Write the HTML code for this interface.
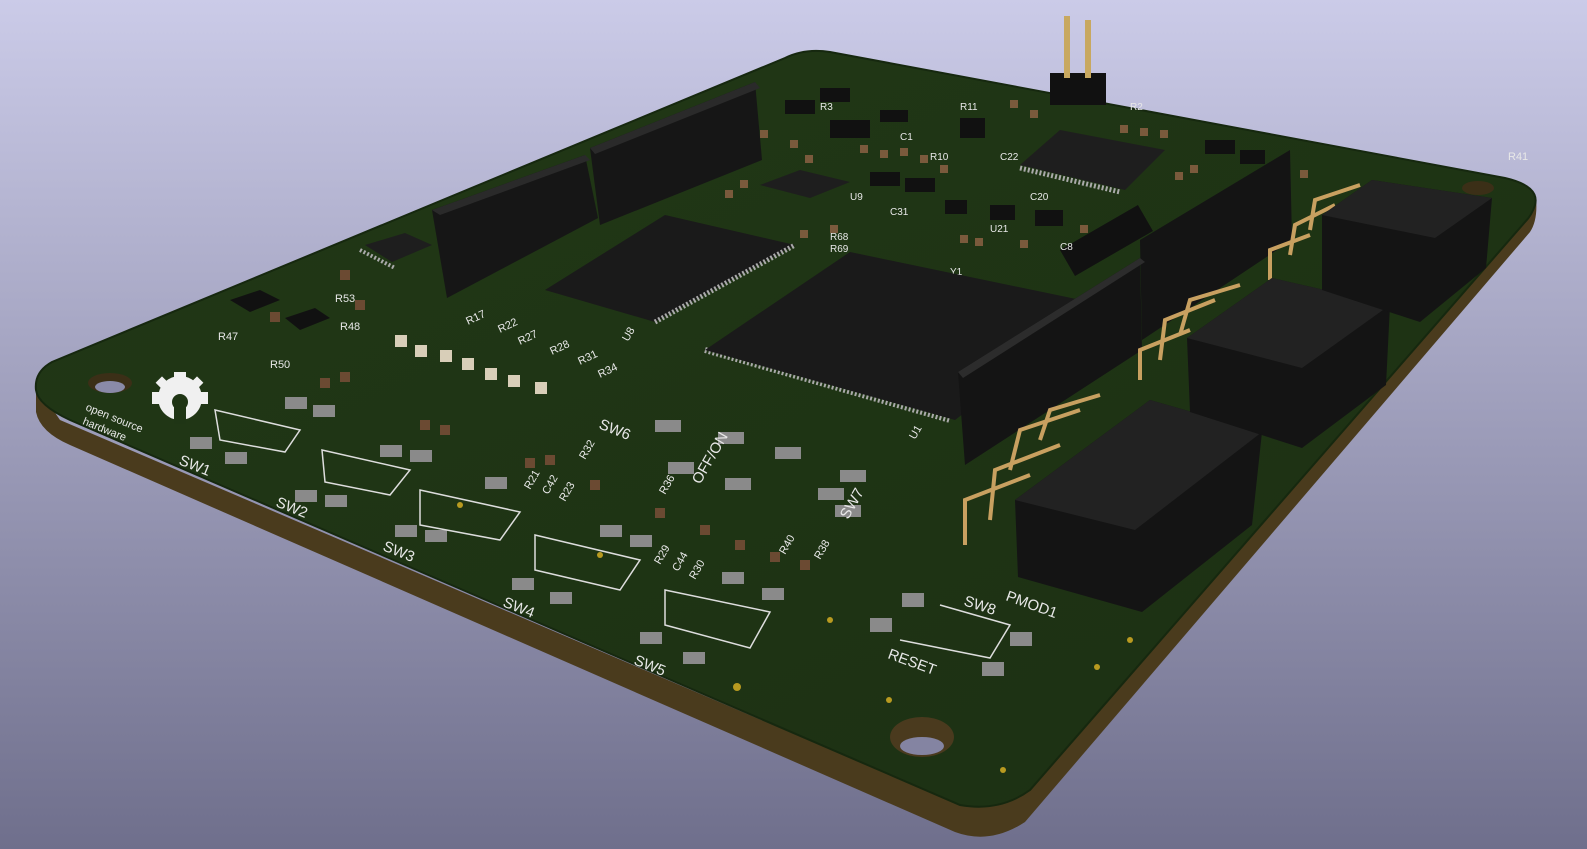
<!DOCTYPE html>
<html><head><meta charset="utf-8"><style>
html,body{margin:0;padding:0;width:1587px;height:849px;overflow:hidden}
svg{display:block}
text{font-family:"Liberation Sans",sans-serif;fill:#e8e8e8}
</style></head><body>
<svg width="1587" height="849" viewBox="0 0 1587 849" xmlns="http://www.w3.org/2000/svg">
<defs>
<linearGradient id="bg" x1="0" y1="0" x2="0" y2="1">
<stop offset="0" stop-color="#cbcbe8"/><stop offset="1" stop-color="#6f6f8c"/>
</linearGradient>
<linearGradient id="gb" x1="0" y1="0" x2="1" y2="1">
<stop offset="0" stop-color="#213816"/><stop offset="1" stop-color="#1c3013"/>
</linearGradient>
</defs>
<rect width="1587" height="849" fill="url(#bg)"/>
<path d="M36,385 L36,412 Q40,432 70,445 L955,832 Q990,845 1025,822 L1530,232 Q1538,220 1536,198 L1030,790 L960,805 L60,420 Z" fill="#4a3b1d"/>
<path d="M36,390 Q34,372 52,362 L785,58 Q805,48 830,52 L1505,178 Q1540,186 1535,205 Q1532,215 1525,222 L1030,790 Q1000,812 960,805 L70,420 Q38,405 36,390 Z" fill="url(#gb)" stroke="#16280f" stroke-width="2"/>
<ellipse cx="110" cy="383" rx="22" ry="10" fill="#3b2f17"/><ellipse cx="110" cy="387" rx="15" ry="6" fill="#8a8aa8"/>
<ellipse cx="922" cy="737" rx="32" ry="20" fill="#4a3a1e"/><ellipse cx="922" cy="746" rx="22" ry="9" fill="#8484a2"/>
<ellipse cx="1478" cy="188" rx="16" ry="7" fill="#3b2f17"/>
<!-- upper area small parts -->
<g fill="#111">
<rect x="785" y="100" width="30" height="14"/><rect x="820" y="88" width="30" height="14"/><rect x="830" y="120" width="40" height="18"/>
<rect x="880" y="110" width="28" height="12"/><rect x="905" y="178" width="30" height="14"/><rect x="960" y="118" width="25" height="20"/>
<rect x="990" y="205" width="25" height="15"/><rect x="945" y="200" width="22" height="14"/><rect x="1035" y="210" width="28" height="16"/>
<rect x="870" y="172" width="30" height="14"/><rect x="1205" y="140" width="30" height="14"/><rect x="1240" y="150" width="25" height="14"/>
<rect x="1060" y="250" width="90" height="30" transform="rotate(-30 1060 250)"/>
</g>
<g fill="#7a5a3c">
<rect x="760" y="130" width="8" height="8"/><rect x="790" y="140" width="8" height="8"/><rect x="805" y="155" width="8" height="8"/><rect x="860" y="145" width="8" height="8"/>
<rect x="880" y="150" width="8" height="8"/><rect x="900" y="148" width="8" height="8"/><rect x="920" y="155" width="8" height="8"/><rect x="940" y="165" width="8" height="8"/>
<rect x="960" y="235" width="8" height="8"/><rect x="975" y="238" width="8" height="8"/><rect x="1010" y="100" width="8" height="8"/><rect x="1030" y="110" width="8" height="8"/>
<rect x="1120" y="125" width="8" height="8"/><rect x="1140" y="128" width="8" height="8"/><rect x="1160" y="130" width="8" height="8"/><rect x="1175" y="172" width="8" height="8"/>
<rect x="1190" y="165" width="8" height="8"/><rect x="1300" y="170" width="8" height="8"/><rect x="740" y="180" width="8" height="8"/><rect x="725" y="190" width="8" height="8"/>
<rect x="800" y="230" width="8" height="8"/><rect x="830" y="225" width="8" height="8"/><rect x="1080" y="225" width="8" height="8"/><rect x="1020" y="240" width="8" height="8"/>
</g>
<g font-size="10">
<text x="900" y="140">C1</text><text x="930" y="160">R10</text><text x="960" y="110">R11</text><text x="1000" y="160">C22</text><text x="1030" y="200">C20</text>
<text x="830" y="240">R68</text><text x="830" y="252">R69</text><text x="950" y="275">Y1</text><text x="1060" y="250">C8</text><text x="890" y="215">C31</text>
<text x="850" y="200">U9</text><text x="990" y="232">U21</text><text x="1130" y="110">R2</text><text x="820" y="110">R3</text>
</g>
<rect x="1050" y="73" width="56" height="32" fill="#111"/>
<rect x="1064" y="16" width="6" height="62" fill="#c8a860"/><rect x="1085" y="20" width="6" height="58" fill="#c8a860"/>
<polygon points="432,210 585,155 598,218 447,298" fill="#161616"/>
<polygon points="432,210 585,155 590,160 440,215" fill="#2a2a2a"/>
<polygon points="590,148 755,82 762,160 600,225" fill="#161616"/>
<polygon points="590,148 755,82 760,88 595,154" fill="#2a2a2a"/>
<polygon points="545,290 665,215 795,245 655,322" fill="#1a1a1a"/>
<g stroke="#aaa" stroke-width="1"><path d="M655,322 L795,245" stroke-dasharray="2 2" stroke-width="5"/><path d="M705,350 L950,420" stroke-dasharray="2 2" stroke-width="6"/></g>
<polygon points="705,350 850,252 1105,305 955,420" fill="#1a1a1a"/>
<polygon points="1020,165 1060,130 1165,150 1125,190" fill="#1e1e1e"/>
<path d="M1020,168 L1120,192" stroke="#aaa" stroke-width="5" stroke-dasharray="2 2"/>
<polygon points="760,185 800,170 850,182 810,198" fill="#1e1e1e"/>
<polygon points="365,245 405,233 432,245 392,262" fill="#1e1e1e"/>
<path d="M360,250 L395,268" stroke="#aaa" stroke-width="4" stroke-dasharray="2 2"/>
<polygon points="230,300 260,290 280,300 250,312" fill="#111"/><polygon points="285,318 315,308 330,318 300,330" fill="#111"/>
<polygon points="958,372 1140,258 1142,350 965,465" fill="#141414"/>
<polygon points="1140,240 1290,150 1292,240 1142,340" fill="#141414"/>
<polygon points="958,372 1140,258 1145,262 963,378" fill="#2c2c2c"/>
<g stroke="#c8a060" stroke-width="4" fill="none">
<path d="M965,545 L965,500 L1030,475"/><path d="M990,520 L995,470 L1060,445"/>
<path d="M1010,470 L1020,430 L1080,410"/><path d="M1040,440 L1050,410 L1100,395"/>
<path d="M1140,380 L1140,350 L1190,330"/><path d="M1160,360 L1165,320 L1215,300"/>
<path d="M1180,335 L1190,300 L1240,285"/><path d="M1270,280 L1270,250 L1310,235"/>
<path d="M1290,255 L1295,225 L1335,205"/><path d="M1310,230 L1315,200 L1360,185"/>
</g>
<polygon points="1015,500 1150,400 1262,432 1252,525 1142,612 1018,577" fill="#141414"/>
<polygon points="1015,500 1150,400 1262,432 1135,530" fill="#222"/>
<polygon points="1187,338 1272,278 1390,305 1386,385 1302,448 1190,412" fill="#141414"/>
<polygon points="1187,338 1272,278 1390,305 1302,368" fill="#222"/>
<polygon points="1322,215 1372,180 1492,198 1486,268 1420,322 1322,290" fill="#141414"/>
<polygon points="1322,215 1372,180 1492,198 1435,238" fill="#222"/>
<g fill="#8a8a8a">
<rect x="190" y="437" width="22" height="12"/><rect x="225" y="452" width="22" height="12"/><rect x="285" y="397" width="22" height="12"/><rect x="313" y="405" width="22" height="12"/>
<rect x="295" y="490" width="22" height="12"/><rect x="325" y="495" width="22" height="12"/><rect x="380" y="445" width="22" height="12"/><rect x="410" y="450" width="22" height="12"/>
<rect x="395" y="525" width="22" height="12"/><rect x="425" y="530" width="22" height="12"/><rect x="485" y="477" width="22" height="12"/>
<rect x="512" y="578" width="22" height="12"/><rect x="550" y="592" width="22" height="12"/><rect x="600" y="525" width="22" height="12"/><rect x="630" y="535" width="22" height="12"/>
<rect x="640" y="632" width="22" height="12"/><rect x="683" y="652" width="22" height="12"/><rect x="722" y="572" width="22" height="12"/><rect x="762" y="588" width="22" height="12"/>
<rect x="655" y="420" width="26" height="12"/><rect x="718" y="432" width="26" height="12"/><rect x="775" y="447" width="26" height="12"/><rect x="840" y="470" width="26" height="12"/>
<rect x="668" y="462" width="26" height="12"/><rect x="725" y="478" width="26" height="12"/><rect x="818" y="488" width="26" height="12"/><rect x="835" y="505" width="26" height="12"/>
<rect x="902" y="593" width="22" height="14"/><rect x="870" y="618" width="22" height="14"/><rect x="1010" y="632" width="22" height="14"/><rect x="982" y="662" width="22" height="14"/>
</g>
<g fill="#6b4a32">
<rect x="320" y="378" width="10" height="10"/><rect x="340" y="372" width="10" height="10"/><rect x="420" y="420" width="10" height="10"/><rect x="440" y="425" width="10" height="10"/>
<rect x="525" y="458" width="10" height="10"/><rect x="545" y="455" width="10" height="10"/><rect x="590" y="480" width="10" height="10"/><rect x="655" y="508" width="10" height="10"/>
<rect x="700" y="525" width="10" height="10"/><rect x="735" y="540" width="10" height="10"/><rect x="770" y="552" width="10" height="10"/><rect x="800" y="560" width="10" height="10"/>
<rect x="340" y="270" width="10" height="10"/><rect x="355" y="300" width="10" height="10"/><rect x="270" y="312" width="10" height="10"/>
</g>
<g fill="#d8ceb8">
<rect x="395" y="335" width="12" height="12"/><rect x="415" y="345" width="12" height="12"/><rect x="440" y="350" width="12" height="12"/><rect x="462" y="358" width="12" height="12"/><rect x="485" y="368" width="12" height="12"/><rect x="508" y="375" width="12" height="12"/><rect x="535" y="382" width="12" height="12"/>
</g>
<g fill="none" stroke="#ddd" stroke-width="1.5">
<path d="M215,410 L300,430 L285,452 L220,440 Z"/><path d="M322,450 L410,470 L390,495 L325,482 Z"/>
<path d="M420,490 L520,512 L500,540 L420,525 Z"/><path d="M535,535 L640,560 L620,590 L535,570 Z"/>
<path d="M665,590 L770,612 L750,648 L665,625 Z"/><path d="M940,605 L1010,625 L990,658 L900,640"/>
</g>
<g fill="#f0f0f0">
<circle cx="180" cy="398" r="22"/>
<rect x="174" y="372" width="12" height="8"/><rect x="200" y="392" width="8" height="12"/><rect x="152" y="392" width="8" height="12"/>
<rect x="193" y="378" width="9" height="9" transform="rotate(45 197 382)"/><rect x="158" y="378" width="9" height="9" transform="rotate(45 162 382)"/>
</g>
<circle cx="180" cy="402" r="8" fill="#1f3515"/><rect x="174" y="404" width="12" height="20" fill="#1f3515"/>
<text x="85" y="410" font-size="11" transform="rotate(22 85 410)">open source</text>
<text x="82" y="424" font-size="11" transform="rotate(22 82 424)">hardware</text>
<g font-size="15">
<text x="178" y="464" transform="rotate(22 178 464)">SW1</text>
<text x="275" y="506" transform="rotate(22 275 506)">SW2</text>
<text x="382" y="550" transform="rotate(22 382 550)">SW3</text>
<text x="502" y="606" transform="rotate(22 502 606)">SW4</text>
<text x="633" y="664" transform="rotate(22 633 664)">SW5</text>
<text x="598" y="428" transform="rotate(22 598 428)">SW6</text>
<text x="848" y="520" transform="rotate(-60 848 520)">SW7</text>
<text x="963" y="605" transform="rotate(18 963 605)">SW8</text>
<text x="1005" y="600" transform="rotate(20 1005 600)">PMOD1</text>
<text x="887" y="658" transform="rotate(20 887 658)">RESET</text>
<text x="700" y="485" transform="rotate(-60 700 485)">OFF/ON</text>
</g>
<g font-size="11">
<text x="530" y="490" transform="rotate(-60 530 490)">R21</text><text x="548" y="495" transform="rotate(-60 548 495)">C42</text>
<text x="565" y="502" transform="rotate(-60 565 502)">R23</text><text x="660" y="565" transform="rotate(-60 660 565)">R29</text>
<text x="678" y="572" transform="rotate(-60 678 572)">C44</text><text x="695" y="580" transform="rotate(-60 695 580)">R30</text>
<text x="785" y="555" transform="rotate(-60 785 555)">R40</text><text x="820" y="560" transform="rotate(-60 820 560)">R38</text>
<text x="585" y="460" transform="rotate(-60 585 460)">R32</text><text x="665" y="495" transform="rotate(-60 665 495)">R36</text>
<text x="915" y="440" transform="rotate(-60 915 440)">U1</text><text x="628" y="342" transform="rotate(-60 628 342)">U8</text>
<text x="468" y="325" transform="rotate(-25 468 325)">R17</text><text x="500" y="333" transform="rotate(-25 500 333)">R22</text>
<text x="520" y="345" transform="rotate(-25 520 345)">R27</text><text x="552" y="355" transform="rotate(-25 552 355)">R28</text>
<text x="580" y="365" transform="rotate(-25 580 365)">R31</text><text x="600" y="378" transform="rotate(-25 600 378)">R34</text>
<text x="218" y="340">R47</text><text x="270" y="368">R50</text><text x="340" y="330">R48</text><text x="335" y="302">R53</text>
<text x="1508" y="160">R41</text>
</g>
<g fill="#b89a20">
<circle cx="737" cy="687" r="4"/><circle cx="1003" cy="770" r="3"/><circle cx="889" cy="700" r="3"/><circle cx="1097" cy="667" r="3"/>
<circle cx="830" cy="620" r="3"/><circle cx="1130" cy="640" r="3"/><circle cx="460" cy="505" r="3"/><circle cx="600" cy="555" r="3"/>
</g>
</svg>
</body></html>
